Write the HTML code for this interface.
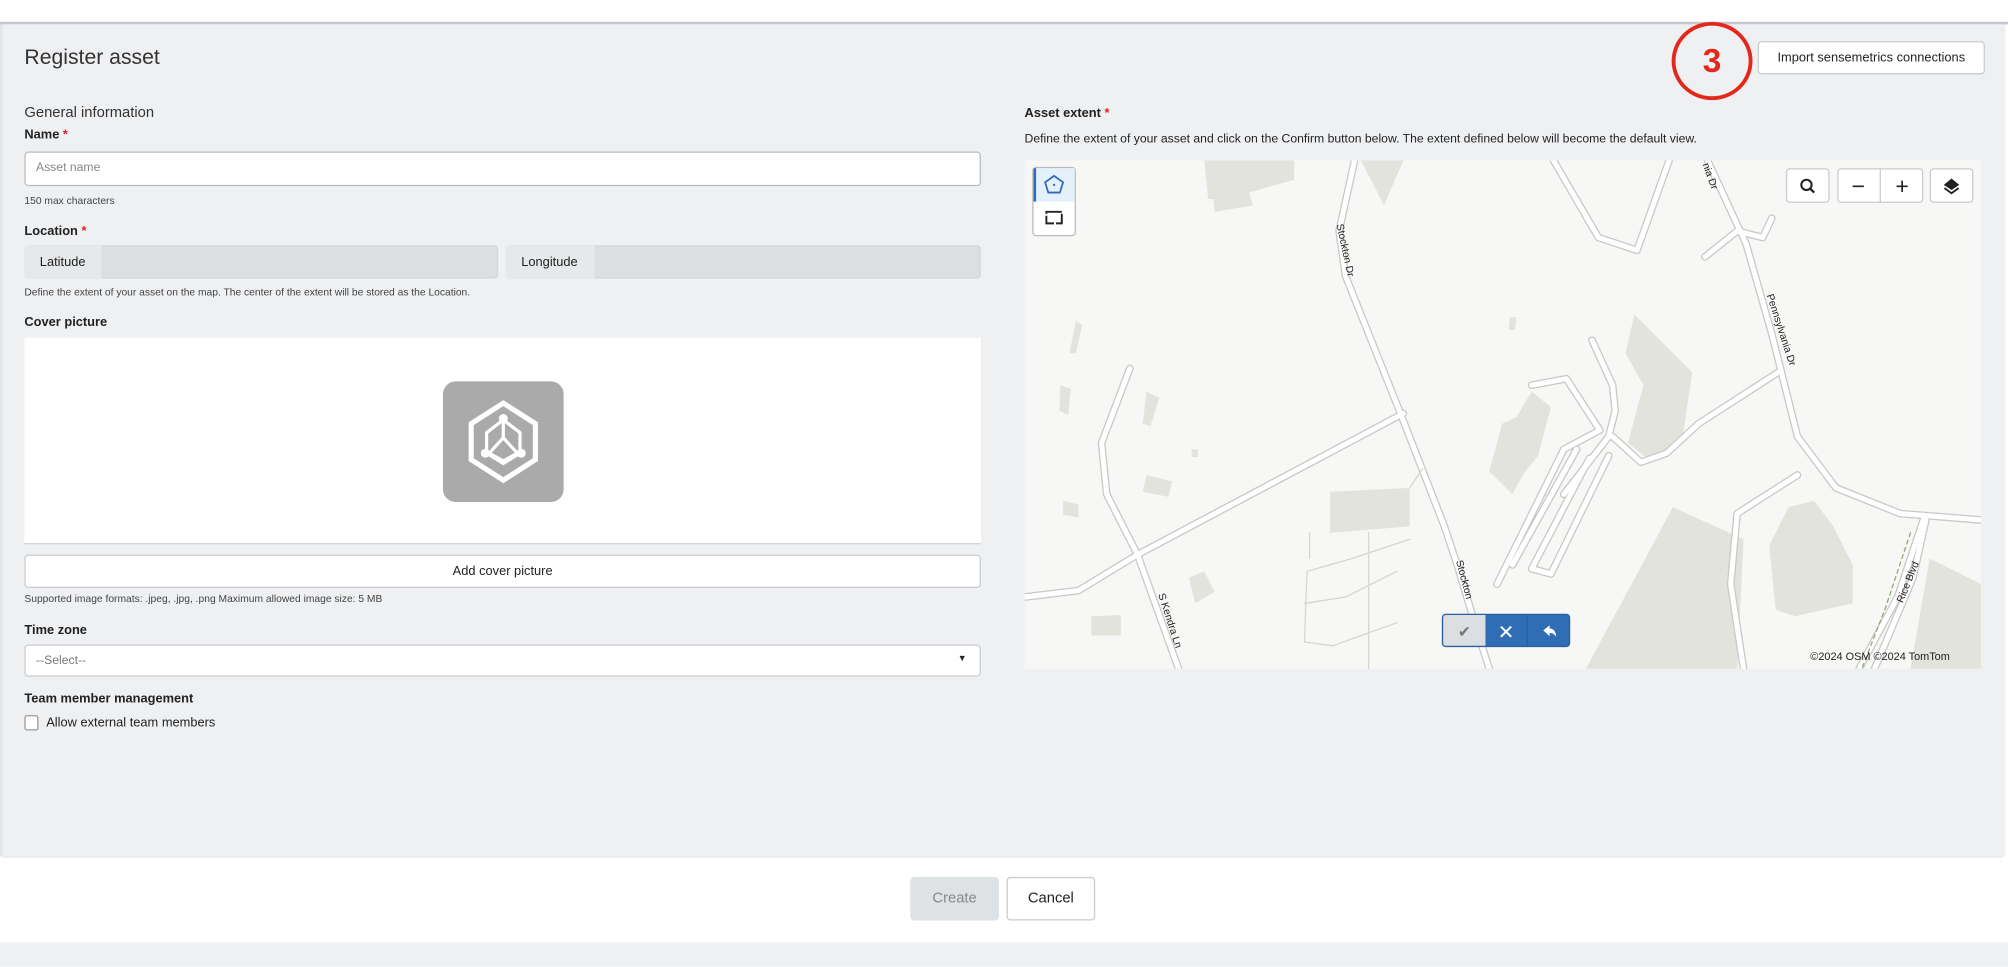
<!DOCTYPE html>
<html><head><meta charset="utf-8"><style>
*{box-sizing:border-box;margin:0;padding:0}
html,body{width:2008px;height:966px;overflow:hidden;background:#fff}
#s{position:absolute;left:0;top:0;width:1564px;height:753px;transform:scale(1.2839);transform-origin:0 0;font-family:"Liberation Sans",sans-serif;color:#222}
.a{position:absolute}
.lbl{font-size:10px;font-weight:bold;color:#222}
.req{color:#d22}
.sm{font-size:8px;color:#444}
.box{background:#fff;border:1px solid #c4c7ca;border-radius:3px}
.btn{background:#fff;border:1px solid #c9ccd0;border-radius:3px;display:flex;align-items:center;justify-content:center;font-size:10px}
</style></head><body><div id="s">
<div class="a" style="left:0;top:0;width:1564px;height:17px;background:#fff"></div>
<div class="a" style="left:0;top:17px;width:1564px;height:2px;background:#c3c7cb"></div>
<div class="a" style="left:0;top:19px;width:1562px;height:648px;background:#eff0f2;border-left:2px solid #e2e4e6"></div>
<div class="a" style="left:19px;top:36px;font-size:16.5px;font-weight:300;color:#333">Register asset</div>
<div class="a" style="left:1302px;top:17px;width:63px;height:61px;border:3px solid #e3281b;border-radius:50%;color:#e3281b;font-size:26px;font-weight:bold;display:flex;align-items:center;justify-content:center">3</div>
<div class="a btn" style="left:1369px;top:32px;width:177px;height:26px">Import sensemetrics connections</div>

<div class="a" style="left:19px;top:82px;font-size:11.5px;color:#333">General information</div>
<div class="a lbl" style="left:19px;top:100px">Name <span class="req">*</span></div>
<div class="a box" style="left:19px;top:118px;width:745px;height:27px;border-color:#b9bcbf"></div>
<div class="a" style="left:28px;top:125px;font-size:9.5px;color:#888">Asset name</div>
<div class="a sm" style="left:19px;top:152px">150 max characters</div>
<div class="a lbl" style="left:19px;top:175px">Location <span class="req">*</span></div>
<div class="a" style="left:19px;top:191px;width:369px;height:26px;background:#dcdfe2;border:1px solid #d4d7da;border-radius:3px"></div>
<div class="a" style="left:19px;top:191px;width:60px;height:26px;background:#e6e8ea;border-radius:3px 0 0 3px;font-size:10px;display:flex;align-items:center;padding-left:12px">Latitude</div>
<div class="a" style="left:394px;top:191px;width:370px;height:26px;background:#dcdfe2;border:1px solid #d4d7da;border-radius:3px"></div>
<div class="a" style="left:394px;top:191px;width:69px;height:26px;background:#e6e8ea;border-radius:3px 0 0 3px;font-size:10px;display:flex;align-items:center;padding-left:12px">Longitude</div>
<div class="a sm" style="left:19px;top:223px">Define the extent of your asset on the map. The center of the extent will be stored as the Location.</div>
<div class="a lbl" style="left:19px;top:246px">Cover picture</div>
<div class="a" style="left:19px;top:263px;width:745px;height:161px;background:#fff;border-bottom:1px solid #d0d3d6"></div>
<div class="a" style="left:345px;top:297px;width:94px;height:94px;background:#aaa;border-radius:10px">
<svg width="94" height="94" viewBox="0 0 94 94"><g fill="none" stroke="#fff" stroke-width="4"><path d="M47 17 L72 33 L72 61 L47 77 L22 61 L22 33Z"/></g><g fill="none" stroke="#fff" stroke-width="2.5"><path d="M47 30 L60 40 L60 56 L47 64 L34 56 L34 40Z"/><path d="M47 30 L47 44 M47 44 L36 56 M47 44 L58 56 M36 56 L47 62 L58 56"/></g><g fill="#fff"><circle cx="47" cy="29" r="3.5"/><circle cx="33" cy="56" r="3.5"/><circle cx="61" cy="56" r="3.5"/></g></svg></div>
<div class="a btn" style="left:19px;top:432px;width:745px;height:26px">Add cover picture</div>
<div class="a sm" style="left:19px;top:462px">Supported image formats: .jpeg, .jpg, .png Maximum allowed image size: 5 MB</div>
<div class="a lbl" style="left:19px;top:486px">Time zone</div>
<div class="a box" style="left:19px;top:502px;width:745px;height:25px;border-color:#c9ccd0"></div>
<div class="a" style="left:28px;top:509px;font-size:9.5px;color:#777">--Select--</div>
<div class="a" style="left:746px;top:510px;font-size:7px">▼</div>
<div class="a lbl" style="left:19px;top:539px">Team member management</div>
<div class="a" style="left:19px;top:557px;width:11px;height:12px;background:#fff;border:1px solid #999;border-radius:2px"></div>
<div class="a" style="left:36px;top:558px;font-size:10px">Allow external team members</div>

<div class="a lbl" style="left:798px;top:83px">Asset extent <span class="req">*</span></div>
<div class="a" style="left:798px;top:103px;font-size:9.5px">Define the extent of your asset and click on the Confirm button below. The extent defined below will become the default view.</div>
<div class="a" style="left:798px;top:125px;width:745px;height:396px;background:#f7f7f5;overflow:hidden">
<svg width="745" height="396" viewBox="0 0 745 396">
<g fill="#e3e3de">
<path d="M140 0 L210 0 L210 15 L175 25 L178 35 L148 40 L147 30 L143 30Z"/>
<path d="M262 0 L295 0 L280 35Z"/>
<path d="M475 120 L520 165 L512 220 L485 232 L470 220 L482 175 L468 150Z"/>
<path d="M395 180 L410 192 L400 230 L388 245 L380 260 L362 242 L372 205 L383 200Z"/>
<path d="M238 258 L300 255 L300 285 L238 290Z"/>
<path d="M505 270 L560 295 L555 400 L435 400Z"/>
<path d="M595 270 L615 265 L630 285 L645 315 L645 345 L600 355 L585 350 L580 300Z"/>
<path d="M705 310 L745 330 L745 396 L690 396Z"/>
<path d="M40 125 L45 128 L40 150 L35 150Z"/><path d="M28 175 L36 178 L34 198 L27 195Z"/><path d="M95 180 L105 185 L98 207 L92 205Z"/>
<path d="M95 245 L115 250 L112 262 L92 258Z"/><path d="M30 265 L42 268 L42 278 L30 276Z"/><path d="M128 325 L140 320 L148 336 L133 345Z"/><path d="M52 355 L75 354 L75 370 L52 370Z"/><path d="M378 122 L383 122 L382 132 L377 132Z"/><path d="M130 225 L135 225 L135 231 L130 231Z"/>
</g>
<g fill="none" stroke-linejoin="round" stroke-linecap="round">
<g stroke="#c8c8c6" stroke-width="6">
<path d="M257 0 L245 55 L250 90 L292 195 L327 285 L337 315 L352 365 L362 396"/>
<path d="M295 197 L88 307 L42 335 L0 340"/>
<path d="M82 162 L60 220 L64 260 L88 307 L120 396"/>
<path d="M532 0 L562 65 L582 135 L602 215 L632 255 L682 275 L745 280"/>
<path d="M702 280 L692 325 L662 396"/><path d="M700 280 L680 340 L650 396"/>
<path d="M412 0 L447 60 L477 70 L502 0"/><path d="M530 75 L555 55 L575 60 L582 45"/>
<path d="M442 140 L458 175 L460 195 L455 215 L420 260"/>
<path d="M458 215 L480 235 L500 228 L525 205 L587 165"/>
<path d="M395 175 L422 170 L448 210"/>
<path d="M448 210 L420 225 L368 330 M430 225 L380 315 M440 232 L395 318 L410 322 L455 230"/>
<path d="M602 245 L555 275 L550 330 L560 396"/>
</g>
<g stroke="#fff" stroke-width="4">
<path d="M257 0 L245 55 L250 90 L292 195 L327 285 L337 315 L352 365 L362 396"/>
<path d="M295 197 L88 307 L42 335 L0 340"/>
<path d="M82 162 L60 220 L64 260 L88 307 L120 396"/>
<path d="M532 0 L562 65 L582 135 L602 215 L632 255 L682 275 L745 280"/>
<path d="M702 280 L692 325 L662 396"/><path d="M700 280 L680 340 L650 396"/>
<path d="M412 0 L447 60 L477 70 L502 0"/><path d="M530 75 L555 55 L575 60 L582 45"/>
<path d="M442 140 L458 175 L460 195 L455 215 L420 260"/>
<path d="M458 215 L480 235 L500 228 L525 205 L587 165"/>
<path d="M395 175 L422 170 L448 210"/>
<path d="M448 210 L420 225 L368 330 M430 225 L380 315 M440 232 L395 318 L410 322 L455 230"/>
<path d="M602 245 L555 275 L550 330 L560 396"/>
</g>
<g stroke="#d5d5d2" stroke-width="1"><path d="M300 295 L255 310 L220 320 L218 375 L240 378 L290 360 M218 345 L250 340 L290 320 M268 290 L268 396 M300 255 L310 240 M222 310 L222 290"/></g>
<path d="M690 290 L670 350 L652 396" stroke="#8aa878" stroke-width="1" stroke-dasharray="3 3"/>
</g>
<g font-family="Liberation Sans,sans-serif" font-size="8" fill="#222">
<text transform="translate(243,50) rotate(78)">Stockton Dr</text>
<text transform="translate(578,105) rotate(72)">Pennsylvania Dr</text>
<text transform="translate(336,312) rotate(75)">Stockton</text>
<text transform="translate(104,338) rotate(72)">S Kendra Ln</text>
<text transform="translate(684,345) rotate(-68)">Rice Blvd</text>
<text transform="translate(528,3) rotate(70)">nia Dr</text>
</g>
<text x="612" y="389" font-family="Liberation Sans,sans-serif" font-size="8.5" fill="#222">©2024 OSM ©2024 TomTom</text>
</svg>
<div class="a" style="left:6px;top:5px;width:34px;height:54px;background:#fff;border:1px solid #bbb;border-radius:3px"></div>
<div class="a" style="left:7px;top:6px;width:32px;height:26px;background:#e4f0fa;border-left:2px solid #2f6db5"></div>
<svg class="a" style="left:14px;top:10px" width="18" height="18" viewBox="0 0 18 18"><path d="M9 2 L16 7 L13.5 15 L4.5 15 L2 7Z" fill="none" stroke="#2f6db5" stroke-width="1.4"/><circle cx="9" cy="9" r="0.9" fill="#2f6db5"/></svg>
<svg class="a" style="left:14px;top:37px" width="18" height="16" viewBox="0 0 18 16"><path d="M3 3 H15 V12 H3Z" fill="none" stroke="#222" stroke-width="1.5" stroke-dasharray="12 1.5"/></svg>
<div class="a btn" style="left:593px;top:6px;width:34px;height:27px"><svg width="14" height="14" viewBox="0 0 14 14"><circle cx="6" cy="6" r="4" fill="none" stroke="#222" stroke-width="1.6"/><path d="M9 9 L12 12" stroke="#222" stroke-width="1.8"/></svg></div>
<div class="a btn" style="left:633px;top:6px;width:67px;height:27px"></div>
<div class="a" style="left:666px;top:6px;width:1px;height:27px;background:#ccc"></div>
<div class="a" style="left:633px;top:7px;width:33px;height:26px;font-size:18px;display:flex;align-items:center;justify-content:center">−</div>
<div class="a" style="left:667px;top:7px;width:33px;height:26px;font-size:18px;display:flex;align-items:center;justify-content:center">+</div>
<div class="a btn" style="left:705px;top:6px;width:34px;height:27px"><svg width="16" height="16" viewBox="0 0 16 16"><path d="M8 2 L14 7 L8 11 L2 7Z" fill="#222"/><path d="M2.5 9.5 L8 13.5 L13.5 9.5" fill="none" stroke="#222" stroke-width="1.5"/></svg></div>
<div class="a" style="left:325px;top:353px;width:100px;height:26px;border-radius:3px;background:#2f6db5;border:1px solid #28609f;overflow:hidden">
<div class="a" style="left:0;top:0;width:33px;height:26px;background:#dcdfe2;display:flex;align-items:center;justify-content:center;color:#777;font-size:12px">✔</div>
<div class="a" style="left:33px;top:0;width:33px;height:26px;display:flex;align-items:center;justify-content:center;border-right:1px solid #28609f"><svg width="12" height="12"><path d="M2 2 L10 10 M10 2 L2 10" stroke="#fff" stroke-width="1.6"/></svg></div>
<div class="a" style="left:66px;top:0;width:33px;height:26px;display:flex;align-items:center;justify-content:center"><svg width="12" height="12" viewBox="0 0 12 12"><path d="M1 5 L6 1 L6 3.5 C9 3.5 11 6 11 10 C9.5 7.5 8 7 6 7 L6 9.5Z" fill="#fff"/></svg></div>
</div>
</div>

<div class="a" style="left:2px;top:667px;width:1558px;height:67px;background:#fff;border-top:1px solid #e4e6e8"></div>
<div class="a" style="left:709px;top:683px;width:69px;height:34px;background:#dfe2e5;border-radius:3px;color:#888;font-size:11.5px;display:flex;align-items:center;justify-content:center">Create</div>
<div class="a btn" style="left:784px;top:683px;width:69px;height:34px;font-size:11.5px;border-color:#ccc">Cancel</div>
<div class="a" style="left:0;top:734px;width:1564px;height:19px;background:#eff0f2"></div>
</div></body></html>
